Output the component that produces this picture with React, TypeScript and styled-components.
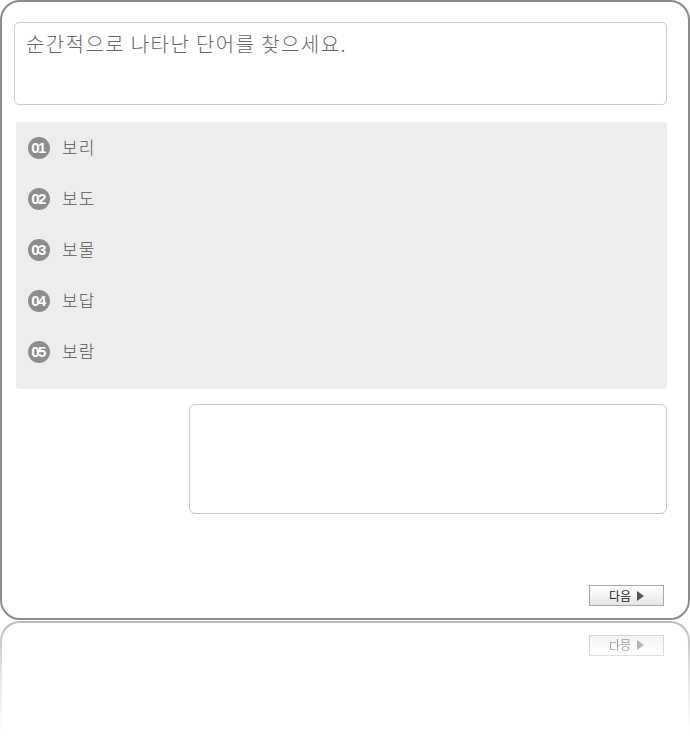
import React from "react";
import styled, { createGlobalStyle } from "styled-components";

const Global = createGlobalStyle`
  html, body { margin: 0; padding: 0; background: #fff; overflow: hidden; }
  body { font-family: "Noto Sans CJK KR", "Noto Sans", sans-serif; }
`;

const Page = styled.div`
  width: 690px;
  display: flex;
  flex-direction: column;
  gap: 1px;
`;

const Card = styled.div`
  box-sizing: border-box;
  width: 690px;
  height: 620px;
  flex-shrink: 0;
  border: 2px solid #8c8c8c;
  border-radius: 20px;
  background: #fff;
  padding: 20px 21px 12px 12px;
  display: flex;
  flex-direction: column;
`;

const ReflectedCard = styled(Card)`
  height: 140px;
  border-top: none;
  border-radius: 0 0 20px 20px;
`;

const Reflection = styled.div`
  height: 119px;
  overflow: hidden;
  -webkit-mask-image: linear-gradient(to bottom, rgba(0, 0, 0, 0.6) 0px, rgba(0, 0, 0, 0.25) 50px, transparent 110px);
  mask-image: linear-gradient(to bottom, rgba(0, 0, 0, 0.6) 0px, rgba(0, 0, 0, 0.25) 50px, transparent 110px);
`;

const Mirror = styled.div`
  transform: scaleY(-1);
  transform-origin: center top;
  margin-top: 140px;
`;

const Question = styled.div`
  box-sizing: border-box;
  height: 83px;
  border: 1px solid #cdcdcd;
  border-radius: 5px;
  padding: 8px 11px;
  font-size: 20px;
  font-weight: 300;
  letter-spacing: 1.4px;
  line-height: 26px;
  color: #666;
`;

const Options = styled.ol`
  list-style: none;
  margin: 17px 0 0 2px;
  padding: 0 12px 12px;
  background: #ededed;
  border-radius: 3px;
  display: flex;
  flex-direction: column;
`;

const Option = styled.li`
  height: 51px;
  display: flex;
  align-items: center;
  gap: 12px;
`;

const Num = styled.span`
  width: 22px;
  height: 22px;
  border-radius: 50%;
  background: #8d8d8d;
  color: #fff;
  font-family: "Liberation Sans", Arial, sans-serif;
  font-weight: bold;
  font-size: 15px;
  letter-spacing: -1.5px;
  display: flex;
  align-items: center;
  justify-content: center;
  padding-right: 2px;
  box-sizing: border-box;
`;

const Label = styled.span`
  font-size: 17px;
  font-weight: 300;
  letter-spacing: 1px;
  color: #555;
  line-height: 1;
  margin-top: -3px;
`;

const Answer = styled.div`
  box-sizing: border-box;
  margin: 15px 0 0 175px;
  height: 110px;
  border: 1px solid #c8c8c8;
  border-radius: 6px;
`;

const Footer = styled.div`
  margin-top: auto;
  display: flex;
  justify-content: flex-end;
  padding-right: 3px;
`;

const NextButton = styled.button`
  box-sizing: border-box;
  width: 75px;
  height: 21px;
  border: 1px solid #a9a9a9;
  background: linear-gradient(to bottom, #ffffff 0%, #f4f4f4 50%, #e4e4e4 100%);
  display: flex;
  align-items: center;
  justify-content: center;
  gap: 4px;
  padding: 0;
  font-family: "Noto Sans CJK KR", sans-serif;
  font-size: 12px;
  color: #222;
  cursor: pointer;
`;

const Arrow = styled.span`
  width: 0;
  height: 0;
  border-top: 5px solid transparent;
  border-bottom: 5px solid transparent;
  border-left: 7px solid #555;
  margin-left: 2px;
`;

const items = ["보리", "보도", "보물", "보답", "보람"];

function Next() {
  return (
    <Footer>
      <NextButton>
        다음 <Arrow />
      </NextButton>
    </Footer>
  );
}

export default function App() {
  return (
    <>
      <Global />
      <Page>
        <Card>
          <Question>순간적으로 나타난 단어를 찾으세요.</Question>
          <Options>
            {items.map((t, i) => (
              <Option key={t}>
                <Num>{String(i + 1).padStart(2, "0")}</Num>
                <Label>{t}</Label>
              </Option>
            ))}
          </Options>
          <Answer />
          <Next />
        </Card>
        <Reflection aria-hidden="true">
          <Mirror>
            <ReflectedCard>
              <Next />
            </ReflectedCard>
          </Mirror>
        </Reflection>
      </Page>
    </>
  );
}
